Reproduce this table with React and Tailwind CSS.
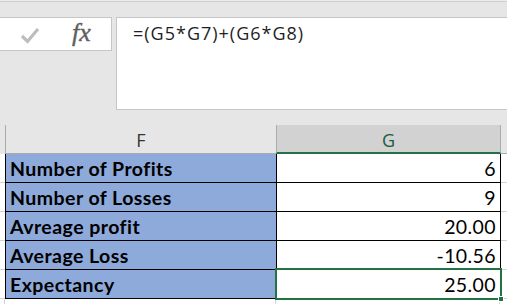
import React from "react";

const rows = [
  ["Number of Profits", "6"],
  ["Number of Losses", "9"],
  ["Avreage profit", "20.00"],
  ["Average Loss", "-10.56"],
  ["Expectancy", "25.00"],
];

export default function App() {
  return (
    <div className="relative w-[507px] h-[304px] overflow-hidden bg-[#e6e6e6] flex flex-col">
      <div className="h-[2px] shrink-0 border-b border-[#d0d0d0] bg-[#ececec]" />
      {/* formula bar */}
      <div className="flex items-start gap-[4px] mt-[15px] shrink-0">
        <div className="w-[112px] h-[34px] bg-white border border-l-0 border-[#c6c6c6] flex items-center">
          <svg width="20" height="17" viewBox="0 0 20 17" className="ml-[20px] mt-[2px]">
            <path d="M2 9 L7.5 14.5 L18 2" fill="none" stroke="#bdbdbd" strokeWidth="3.2" strokeLinejoin="miter" />
          </svg>
          <span className="ml-[32px] mb-[2px] text-[26px] italic text-[#5f5f5f] leading-none [-webkit-text-stroke:0.4px_#5f5f5f]" style={{ fontFamily: '"Liberation Serif", serif' }}>
            fx
          </span>
        </div>
        <div className="flex-1 h-[93px] bg-white border border-r-0 border-[#c6c6c6] pl-[16px] pt-[3px] text-[18px] tracking-[1px] text-[#1f1f1f] leading-[24px]" style={{ fontFamily: '"Open Sans", sans-serif' }}>
          =(G5*G7)+(G6*G8)
        </div>
      </div>
      {/* column headers */}
      <div className="flex h-[29px] mt-[15px] shrink-0 text-[18px]" style={{ fontFamily: '"Open Sans", sans-serif' }}>
        <div className="w-[5px] shrink-0" />
        <div className="w-[271px] shrink-0 border-l border-b border-l-[#ababab] border-b-[#ababab] flex items-center justify-center text-[#333] pt-[3px]">F</div>
        <div className="w-[225px] shrink-0 bg-[#d2d2d2] border-l border-r border-[#ababab] border-b-2 border-b-[#217346] flex items-center justify-center text-[#1d5c3e] pt-[3px]">G</div>
        <div className="flex-1 border-b border-[#ababab]" />
      </div>
      {/* rows */}
      <div className="flex flex-col bg-white flex-1">
        {rows.map(([label, value]) => (
          <div key={label} className="flex h-[29px] shrink-0">
            <div className="w-[5px] shrink-0 border-b border-[#d4d4d4]" />
            <div
              className="w-[271px] shrink-0 bg-[#8eaadb] border-l border-b border-black pl-[4px] flex items-center pt-[1px] text-[19.5px] tracking-[0.45px] font-bold text-black leading-none"
              style={{ fontFamily: 'Lato, sans-serif' }}
            >
              {label}
            </div>
            <div
              className="w-[225px] shrink-0 border-l border-r border-b border-black flex items-center justify-end pr-[4px] pt-[1px] text-[19.5px] tracking-[0.4px] text-black leading-none"
              style={{ fontFamily: 'Lato, sans-serif' }}
            >
              {value}
            </div>
            <div className="flex-1 border-b border-[#d4d4d4]" />
          </div>
        ))}
        <div className="flex flex-1">
          <div className="w-[5px] shrink-0 border-r border-[#d4d4d4]" />
          <div className="w-[271px] shrink-0 border-r border-[#d4d4d4]" />
          <div className="w-[224px] shrink-0 border-r border-[#d4d4d4]" />
        </div>
      </div>
      {/* selection overlay */}
      <div className="absolute left-[275px] top-[268px] w-[227px] h-[32px] border-2 border-[#217346] pointer-events-none" />
      <div className="absolute left-[498px] top-[296px] w-[6px] h-[6px] bg-[#217346] border border-white" />
    </div>
  );
}
